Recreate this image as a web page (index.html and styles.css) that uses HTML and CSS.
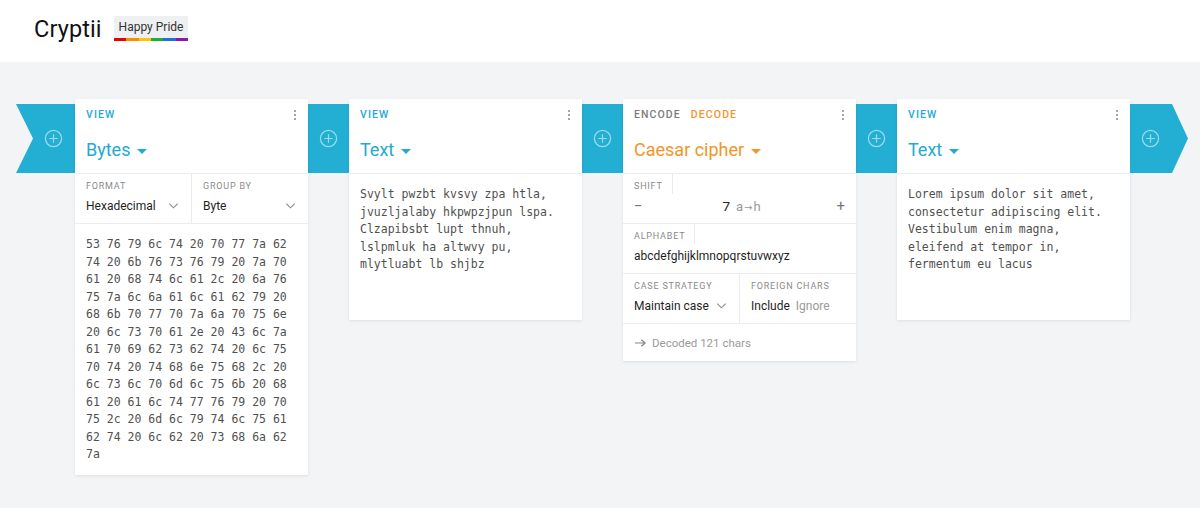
FILE: index.html
```html
<!DOCTYPE html>
<html>
<head>
<meta charset="utf-8">
<link rel="stylesheet" href="styles.css">
</head>
<body>
<header class="header">
  <div class="logo">Cryptii</div>
  <div class="badge">Happy Pride<span class="rainbow"><i class="r1"></i><i class="r2"></i><i class="r3"></i><i class="r4"></i><i class="r5"></i><i class="r6"></i></span></div>
</header>
<main class="pipe">
  <div class="conn conn-tail"><svg class="plus" viewBox="0 0 20 20"><circle cx="10" cy="10" r="8.5"/><path d="M10 5.5v9M5.5 10h9"/></svg></div>

  <section class="card">
    <div class="card-head">
      <div class="mode"><span>VIEW</span></div>
      <div class="dots"><i></i><i></i><i></i></div>
      <div class="title">Bytes<span class="caret"></span></div>
    </div>
    <div class="row split">
      <div class="field">
        <div class="label">FORMAT</div>
        <div class="value">Hexadecimal<svg class="chev" viewBox="0 0 12 8"><path d="M1.5 1.5l4.5 4.5 4.5-4.5"/></svg></div>
      </div>
      <div class="field">
        <div class="label">GROUP BY</div>
        <div class="value">Byte<svg class="chev" viewBox="0 0 12 8"><path d="M1.5 1.5l4.5 4.5 4.5-4.5"/></svg></div>
      </div>
    </div>
    <div class="mono hex">53 76 79 6c 74 20 70 77 7a 62
74 20 6b 76 73 76 79 20 7a 70
61 20 68 74 6c 61 2c 20 6a 76
75 7a 6c 6a 61 6c 61 62 79 20
68 6b 70 77 70 7a 6a 70 75 6e
20 6c 73 70 61 2e 20 43 6c 7a
61 70 69 62 73 62 74 20 6c 75
70 74 20 74 68 6e 75 68 2c 20
6c 73 6c 70 6d 6c 75 6b 20 68
61 20 61 6c 74 77 76 79 20 70
75 2c 20 6d 6c 79 74 6c 75 61
62 74 20 6c 62 20 73 68 6a 62
7a</div>
  </section>

  <div class="conn"><svg class="plus" viewBox="0 0 20 20"><circle cx="10" cy="10" r="8.5"/><path d="M10 5.5v9M5.5 10h9"/></svg></div>

  <section class="card">
    <div class="card-head">
      <div class="mode"><span>VIEW</span></div>
      <div class="dots"><i></i><i></i><i></i></div>
      <div class="title">Text<span class="caret"></span></div>
    </div>
    <div class="mono text">Svylt pwzbt kvsvy zpa htla,
jvuzljalaby hkpwpzjpun lspa.
Clzapibsbt lupt thnuh,
lslpmluk ha altwvy pu,
mlytluabt lb shjbz</div>
  </section>

  <div class="conn"><svg class="plus" viewBox="0 0 20 20"><circle cx="10" cy="10" r="8.5"/><path d="M10 5.5v9M5.5 10h9"/></svg></div>

  <section class="card">
    <div class="card-head">
      <div class="mode"><span class="off">ENCODE</span><span class="on">DECODE</span></div>
      <div class="dots"><i></i><i></i><i></i></div>
      <div class="title orange">Caesar cipher<span class="caret"></span></div>
    </div>
    <div class="row">
      <div class="label boxed">SHIFT</div>
      <div class="shift">
        <span class="pm">&minus;</span>
        <span class="shift-val">7<span class="map">a<span class="arr">→</span>h</span></span>
        <span class="pm">+</span>
      </div>
    </div>
    <div class="row">
      <div class="label boxed">ALPHABET</div>
      <div class="value alpha">abcdefghijklmnopqrstuvwxyz</div>
    </div>
    <div class="row split">
      <div class="field">
        <div class="label">CASE STRATEGY</div>
        <div class="value">Maintain case<svg class="chev" viewBox="0 0 12 8"><path d="M1.5 1.5l4.5 4.5 4.5-4.5"/></svg></div>
      </div>
      <div class="field">
        <div class="label">FOREIGN CHARS</div>
        <div class="value"><span>Include</span><span class="muted">Ignore</span></div>
      </div>
    </div>
    <div class="status"><svg class="arrow" viewBox="0 0 14 10"><path d="M1 5h11M8 1.5l4 3.5-4 3.5"/></svg>Decoded 121 chars</div>
  </section>

  <div class="conn"><svg class="plus" viewBox="0 0 20 20"><circle cx="10" cy="10" r="8.5"/><path d="M10 5.5v9M5.5 10h9"/></svg></div>

  <section class="card">
    <div class="card-head">
      <div class="mode"><span>VIEW</span></div>
      <div class="dots"><i></i><i></i><i></i></div>
      <div class="title">Text<span class="caret"></span></div>
    </div>
    <div class="mono text">Lorem ipsum dolor sit amet,
consectetur adipiscing elit.
Vestibulum enim magna,
eleifend at tempor in,
fermentum eu lacus</div>
  </section>

  <div class="conn conn-head"><svg class="plus" viewBox="0 0 20 20"><circle cx="10" cy="10" r="8.5"/><path d="M10 5.5v9M5.5 10h9"/></svg></div>
</main>
</body>
</html>
```

FILE: styles.css
```css
* { box-sizing: border-box; }
html, body { margin: 0; padding: 0; }
body {
  font-family: Roboto, "Liberation Sans", sans-serif;
  background: #f2f4f5;
  width: 1200px;
  height: 508px;
  overflow: hidden;
}
.header {
  height: 62px;
  background: #fff;
  display: flex;
  align-items: center;
  padding-left: 34px;
  padding-bottom: 5px;
}
.logo {
  font-size: 23.5px;
  font-weight: 400;
  color: #111;
  letter-spacing: 0.1px;
}
.badge {
  position: relative;
  margin-left: 12px;
  height: 25px;
  padding: 0 5px;
  background: #eef0f2;
  font-size: 12px;
  color: #333;
  display: flex;
  align-items: center;
  padding-bottom: 3px;
}
.rainbow {
  position: absolute;
  left: 0; right: 0; bottom: 0;
  height: 3px;
  display: flex;
}
.rainbow i { flex: 1; }
.r1 { background: #e40303; }
.r2 { background: #ff8c00; }
.r3 { background: #ffc400; }
.r4 { background: #1fad3a; }
.r5 { background: #1d6fe0; }
.r6 { background: #8a1ba8; }

.pipe {
  display: flex;
  align-items: flex-start;
  padding: 37px 0 0 16px;
}
.conn {
  width: 41px;
  height: 69px;
  margin-top: 5px;
  background: #23afd4;
  display: flex;
  align-items: center;
  justify-content: center;
  flex: none;
}
.conn-tail {
  width: 59px;
  clip-path: polygon(0 0, 100% 0, 100% 100%, 0 100%, 17px 50%);
  justify-content: flex-end;
  padding-right: 12px;
}
.conn-head {
  width: 58px;
  clip-path: polygon(0 0, 42px 0, 100% 50%, 42px 100%, 0 100%);
  justify-content: flex-start;
  padding-left: 11px;
}
.plus {
  width: 19px;
  height: 19px;
  fill: none;
  stroke: rgba(255,255,255,0.55);
  stroke-width: 1.3;
}
.card {
  width: 233px;
  flex: none;
  background: #fff;
  box-shadow: 0 1px 3px rgba(0,0,0,0.09);
  position: relative;
}
.card-head {
  position: relative;
  padding: 9px 11px 11px;
  border-bottom: 1px solid #ececec;
}
.mode {
  height: 14px;
  font-size: 10.5px;
  line-height: 14px;
  font-weight: 500;
  letter-spacing: 1.1px;
  color: #23aad1;
  display: flex;
  gap: 10px;
}
.mode .off { color: #7d7d7d; }
.mode .on { color: #f0962a; }
.dots {
  position: absolute;
  top: 11px;
  right: 12px;
  display: flex;
  flex-direction: column;
  gap: 2px;
}
.dots i {
  width: 2px;
  height: 2px;
  border-radius: 50%;
  background: #888;
}
.title {
  margin-top: 16px;
  height: 24px;
  font-size: 18px;
  line-height: 24px;
  color: #23aad1;
  display: flex;
  align-items: center;
}
.title.orange { color: #f2952a; }
.caret {
  width: 0;
  height: 0;
  margin-left: 7px;
  margin-top: 2px;
  border-left: 5px solid transparent;
  border-right: 5px solid transparent;
  border-top: 5px solid currentColor;
}
.row {
  border-bottom: 1px solid #ececec;
  height: 50px;
}
.split {
  display: flex;
}
.field {
  flex: 1;
  padding: 6px 11px 0;
}
.field + .field { border-left: 1px solid #ececec; }
.label {
  font-size: 9px;
  line-height: 12px;
  letter-spacing: 0.8px;
  color: #8a8a8a;
}
.value {
  margin-top: 5px;
  height: 18px;
  font-size: 12px;
  line-height: 18px;
  color: #1f1f1f;
  display: flex;
  align-items: center;
  justify-content: space-between;
}
.value .muted { color: #9a9a9a; margin-left: 6px; margin-right: auto; }
.chev {
  width: 11px;
  height: 8px;
  fill: none;
  stroke: #8a8a8a;
  stroke-width: 1.2;
  margin-right: 1px;
}
.label.boxed {
  display: inline-block;
  padding: 6px 9px 2px 11px;
  border-right: 1px solid #ececec;
}
.alpha {
  margin-top: 3px;
  padding: 0 11px;
  font-size: 12px;
}
.shift {
  display: flex;
  align-items: center;
  justify-content: space-between;
  padding: 0 11px;
  height: 20px;
  margin-top: 2px;
}
.pm {
  font-size: 15px;
  color: #777;
  width: 12px;
}
.pm:last-child { text-align: right; }
.shift-val {
  font-size: 13.5px;
  color: #222;
  margin-left: 4px;
}
.map {
  color: #9a9a9a;
  margin-left: 6px;
  font-size: 13px;
}
.arr {
  font-family: "DejaVu Sans", sans-serif;
  font-size: 10px;
  margin: 0 1px;
}
.mono {
  font-family: "DejaVu Sans Mono", "Liberation Mono", monospace;
  font-size: 11.5px;
  line-height: 17.5px;
  color: #505050;
  white-space: pre;
  padding: 12px 11px 11px;
}
.text {
  min-height: 146px;
}
.status {
  height: 37px;
  display: flex;
  align-items: center;
  padding: 0 11px;
  font-size: 11.5px;
  color: #9a9a9a;
}
.arrow {
  width: 13px;
  height: 10px;
  fill: none;
  stroke: #888;
  stroke-width: 1.3;
  margin-right: 5px;
}
```
